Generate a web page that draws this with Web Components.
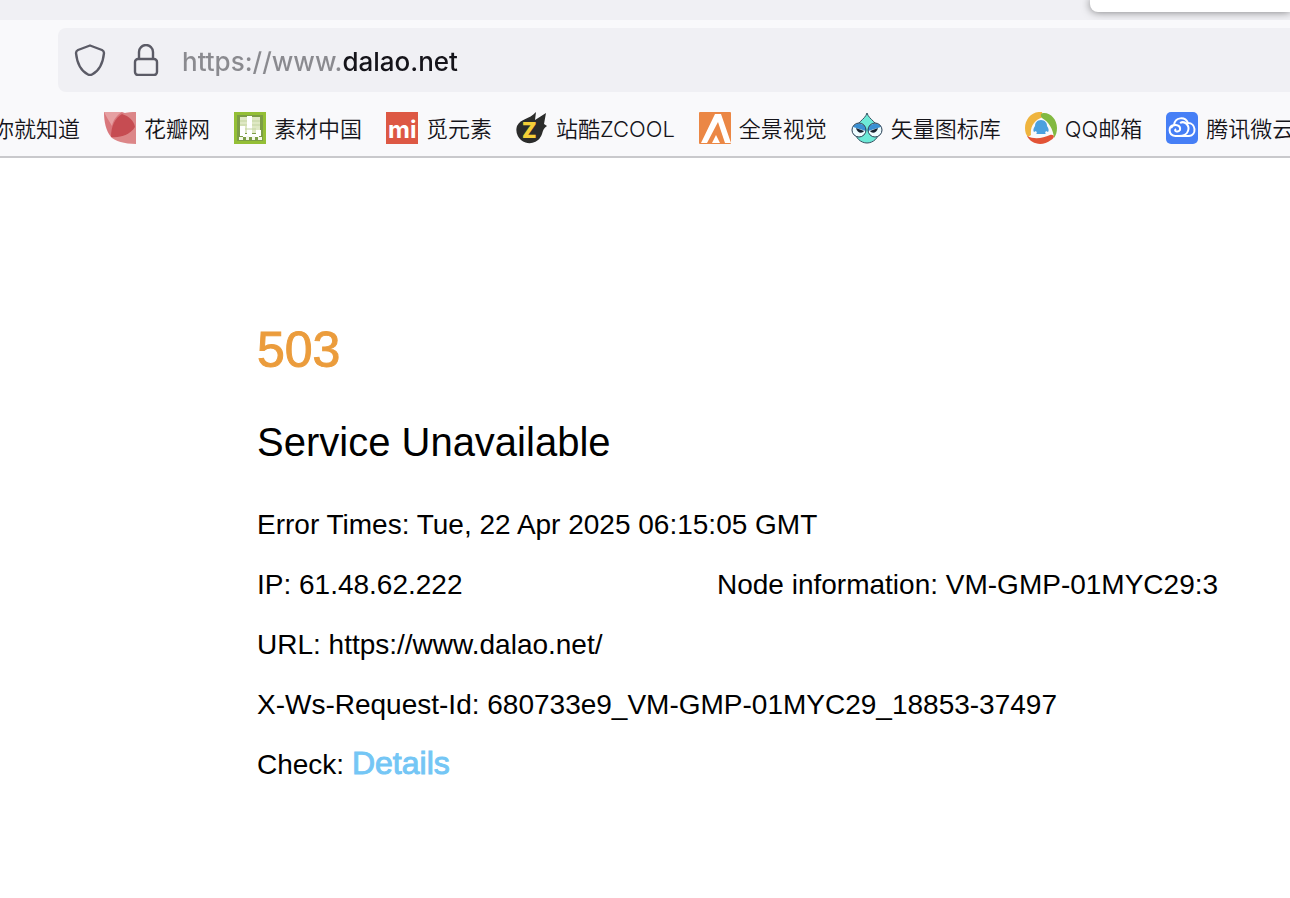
<!DOCTYPE html>
<html lang="zh-CN">
<head>
<meta charset="utf-8">
<title>503 Service Unavailable</title>
<style>
    body {
        margin: 0;
        background: #fff;
        font-family: Inter, "Noto Sans CJK SC", sans-serif;
        overflow-x: hidden;
    }
</style>
</head>
<body>
    <browser-chrome>
        <address-bar slot="address" value="https://www.dalao.net"></address-bar>
        <bookmark-item>你就知道</bookmark-item>
        <bookmark-item icon="petal">花瓣网</bookmark-item>
        <bookmark-item icon="su">素材中国</bookmark-item>
        <bookmark-item icon="mi">觅元素</bookmark-item>
        <bookmark-item icon="zcool">站酷ZCOOL</bookmark-item>
        <bookmark-item icon="view">全景视觉</bookmark-item>
        <bookmark-item icon="drop">矢量图标库</bookmark-item>
        <bookmark-item icon="mail">QQ邮箱</bookmark-item>
        <bookmark-item icon="cloud">腾讯微云</bookmark-item>
    </browser-chrome>
    <error-page code="503" reason="Service Unavailable">
        <error-row>Error Times: Tue, 22 Apr 2025 06:15:05 GMT</error-row>
        <error-row>IP: 61.48.62.222<span slot="extra">Node information: VM-GMP-01MYC29:3</span></error-row>
        <error-row>URL: https://www.dalao.net/</error-row>
        <error-row>X-Ws-Request-Id: 680733e9_VM-GMP-01MYC29_18853-37497</error-row>
        <error-row>Check: <detail-link href="#details">Details</detail-link></error-row>
    </error-page>

<script>
const ICONS = {
    petal: `
        <path d="M0 0H18C26 2 31 8 32 14C27 24 16 27 7 25C2 19 0 10 0 0Z" fill="#d9777c"/>
        <path d="M0 0H18C13 3 9 8 8 14C5 9 2 4 0 0Z" fill="#e6a0a2"/>
        <path d="M18 2C23 0 28 0 32 0V32C20 32 11 29 7 25Z" fill="#dc8688"/>
        <path d="M18 2C25 4 30 9 31 15C26 23 16 26 7 25C7 14 11 6 18 2Z" fill="#c64c52"/>`,
    su: `
        <rect width="32" height="32" fill="#94bf36"/>
        <rect x="3" y="3" width="26" height="26" fill="#7c9d45"/>
        <path d="M6 5H26V21H6Z" fill="#dfe8c4"/>
        <path d="M13 4H18V24H13ZM6 14H11V24H6ZM22 18H27V24H22ZM9 22H25V25H9Z" fill="#fff"/>
        <path d="M6 9H13M18 9H26M6 13H13M18 13H26M11 17H22" stroke="#c3d4a0" stroke-width="1"/>
        <path d="M5 25H9V28H5ZM12 24H15V28H12ZM18 24H21V28H18ZM24 25H28V28H24Z" fill="#f4f7e8"/>`,
    mi: `
        <rect width="32" height="32" fill="#dd5844"/>
        <text x="2" y="26" font-family="Inter, sans-serif" font-size="24" font-weight="700" fill="#fff">mi</text>`,
    zcool: `
        <path d="M20 0L19 8L30 1L28 12L31 14C27 17 27 19 26 22A12 12 0 1 1 1 14C5 6 13 8 20 0Z" fill="#2b2c2b"/>
        <text x="6" y="26" font-family="Inter, sans-serif" font-size="21" font-weight="900" fill="#f5cf38">Z</text>`,
    view: `
        <rect width="32" height="32" rx="1" fill="#eb8745"/>
        <path d="M16 2H22L32 31H26L19 10L8 31H2Z" fill="#fff"/>
        <path d="M17 23L21 31H13Z" fill="#fff"/>`,
    drop: `
        <path d="M16 1C18 8 28 11 28 19C28 26 22 31 16 31S4 26 4 19C4 11 14 8 16 1Z" fill="#6de9d7" stroke="#344e60"/>
        <circle cx="8" cy="18" r="7" fill="#eefcff"/>
        <circle cx="24" cy="18" r="7" fill="#eefcff"/>
        <path d="M2 15A7 7 0 0 1 15 19ZM30 15A7 7 0 0 0 17 19Z" fill="#398fd3"/>
        <path d="M5 16L13 19C11 22 6 21 5 16ZM27 16L19 19C21 22 26 21 27 16Z" fill="#172230"/>
        <circle cx="8" cy="18" r="7" fill="none" stroke="#263d52"/>
        <circle cx="24" cy="18" r="7" fill="none" stroke="#263d52"/>`,
    mail: `
        <path d="M17 0C7-1 0 7 0 16C0 20 1 23 3 25L6 23C5 15 9 8 18 5Z" fill="#efb43e"/>
        <path d="M18 1C25 0 32 7 32 16C32 20 31 23 29 26C28 17 24 10 17 6Q14 2 18 1Z" fill="#82b941"/>
        <path d="M2 24C10 28 18 26 25 23C30 22 30 26 26 28C17 35 6 32 2 24Z" fill="#e25336"/>
        <path d="M16 8C20 8 22 11 22 14C24 17 24 19 23 20L21 19L20 21L21 22H11L12 21L11 19L9 20C8 19 8 17 10 14C10 11 12 8 16 8Z" fill="#4ba0df"/>`,
    cloud: `
        <rect width="32" height="32" rx="5" fill="#467ff6"/>
        <path d="M9 24C2 23 2 14 8 13C9 5 19 4 22 11C30 11 31 23 23 24H9M5 16C8 11 15 13 14 18C12 21 7 19 10 17M14 11C19 8 24 14 22 19C21 22 17 24 13 24" fill="none" stroke="#fff" stroke-width="2"/>`
}

class BrowserChrome extends HTMLElement {
    constructor() {
        super()
        this.attachShadow({ mode: 'open' })
        this.shadowRoot.innerHTML = `
            <style>
                :host {
                    display: block;
                    background: #f9f9fb;
                    border-bottom: 2px solid #c9c9cc;
                }

                .tabs {
                    display: flex;
                    justify-content: flex-end;
                    height: 20px;
                    background: #f0f0f4;
                    overflow: hidden;
                }

                .tab {
                    width: 200px;
                    height: 12px;
                    background: #fff;
                    border-radius: 0 0 0 8px;
                    box-shadow: 0 0 8px rgba(0, 0, 0, 0.5);
                }

                .toolbar {
                    padding: 8px 0 8px 58px;
                }

                nav {
                    display: flex;
                    gap: 24px;
                    height: 56px;
                    align-items: center;
                    margin-left: -8px;
                    overflow: hidden;
                }
            </style>
            <div class="tabs"><div class="tab"></div></div>
            <div class="toolbar"><slot name="address"></slot></div>
            <nav><slot></slot></nav>
        `
    }
}

class AddressBar extends HTMLElement {
    constructor() {
        super()
        this.attachShadow({ mode: 'open' })
        this.shadowRoot.innerHTML = `
            <style>
                :host {
                    display: flex;
                    align-items: center;
                    gap: 24px;
                    height: 64px;
                    padding-left: 16px;
                    background: #f0f0f4;
                    border-radius: 8px 0 0 8px;
                }

                svg {
                    flex: none;
                    width: 32px;
                    height: 32px;
                    fill: none;
                    stroke: #5b5b66;
                    stroke-width: 2.4;
                    stroke-linejoin: round;
                }

                /* scheme and subdomain are dimmed, the domain is not */
                input {
                    flex: 1;
                    min-width: 0;
                    height: 40px;
                    margin-left: -4px;
                    padding: 2px 0 0;
                    border: 0;
                    outline: 0;
                    font: 500 26px Inter, sans-serif;
                    color: transparent;
                    background: linear-gradient(to right, #8a8a8f 159px, #15141a 159px);
                    -webkit-background-clip: text;
                    background-clip: text;
                }
            </style>
            <svg viewBox="0 0 32 32" aria-hidden="true"><path d="M16 1.5L28 6Q30 7 30 9C29 19 25 27 18 30.5Q16 31.5 14 30.5C7 27 3 19 2 9Q2 7 4 6Z"/></svg>
            <svg viewBox="0 0 32 32" aria-hidden="true"><rect x="5" y="15" width="22" height="16" rx="3"/><path d="M9 15V8A7 7 0 0 1 23 8V15"/></svg>
            <input type="text" aria-label="Address" spellcheck="false">
        `
    }

    connectedCallback() {
        this.shadowRoot.querySelector('input').value = this.getAttribute('value')
    }
}

class BookmarkItem extends HTMLElement {
    constructor() {
        super()
        this.attachShadow({ mode: 'open' })
    }

    connectedCallback() {
        const icon = ICONS[this.getAttribute('icon')]
        this.shadowRoot.innerHTML = `
            <style>
                :host {
                    flex: none;
                }

                a {
                    display: flex;
                    align-items: center;
                    gap: 8px;
                    color: #15141a;
                    font-size: 22px;
                    font-weight: 350;
                    line-height: 32px;
                    white-space: nowrap;
                    text-decoration: none;
                }

                span {
                    padding-top: 2px;
                }

                svg {
                    width: 32px;
                    height: 32px;
                }
            </style>
            <a href="#">${icon ? `<svg viewBox="0 0 32 32" aria-hidden="true">${icon}</svg>` : ''}<span><slot></slot></span></a>
        `
    }
}

class ErrorPage extends HTMLElement {
    constructor() {
        super()
        this.attachShadow({ mode: 'open' })
    }

    connectedCallback() {
        this.shadowRoot.innerHTML = `
            <style>
                :host {
                    display: block;
                    padding: 162px 0 80px 257px;
                    font-family: "Liberation Sans", Arial, sans-serif;
                    color: #000;
                }

                h1, h2 {
                    margin: 0;
                    font-weight: normal;
                    line-height: 60px;
                }

                h1 {
                    margin-bottom: 32px;
                    font-size: 50px;
                    color: #eb9c3c;
                    -webkit-text-stroke: 1px;
                }

                h2 {
                    margin-bottom: 23px;
                    font-size: 40px;
                }
            </style>
            <h1>${this.getAttribute('code')}</h1>
            <h2>${this.getAttribute('reason')}</h2>
            <slot></slot>
        `
    }
}

class ErrorRow extends HTMLElement {
    constructor() {
        super()
        this.attachShadow({ mode: 'open' })
        this.shadowRoot.innerHTML = `
            <style>
                :host {
                    display: grid;
                    grid-template-columns: minmax(460px, max-content) max-content;
                    font-size: 28px;
                    line-height: 60px;
                    white-space: nowrap;
                }
            </style>
            <div><slot></slot></div>
            <div><slot name="extra"></slot></div>
        `
    }
}

class DetailLink extends HTMLElement {
    constructor() {
        super()
        this.attachShadow({ mode: 'open' })
        this.shadowRoot.innerHTML = `
            <style>
                a {
                    color: #74c6f5;
                    font-size: 32px;
                    line-height: 1;
                    text-decoration: none;
                    -webkit-text-stroke: 1px;
                }
            </style>
            <a><slot></slot></a>
        `
    }

    connectedCallback() {
        this.shadowRoot.querySelector('a').href = this.getAttribute('href')
    }
}

customElements.define('browser-chrome', BrowserChrome)
customElements.define('address-bar', AddressBar)
customElements.define('bookmark-item', BookmarkItem)
customElements.define('error-page', ErrorPage)
customElements.define('error-row', ErrorRow)
customElements.define('detail-link', DetailLink)
</script>
</body>
</html>
